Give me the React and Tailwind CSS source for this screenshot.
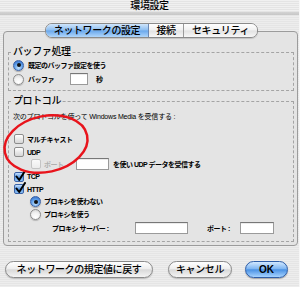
import React from "react";

// Aqua 風の小さな部品
const FONT = "font-['Liberation_Sans','Noto_Sans_CJK_JP',sans-serif]";
const STRIPES = "bg-[repeating-linear-gradient(#ededed_0_1px,#e5e5e5_1px_2px)]";

const Radio = ({ checked }) =>
  checked ? (
    <span className="w-[11px] h-[11px] shrink-0 rounded-full border border-[#3b62a6] bg-[radial-gradient(circle_at_50%_75%,#c4e4ff,#5a9ae6_55%,#2d63bd)] flex items-center justify-center shadow-[0_1px_1px_rgba(0,0,0,0.25)]">
      <span className="w-[4px] h-[4px] rounded-full bg-[#111]" />
    </span>
  ) : (
    <span className="w-[11px] h-[11px] shrink-0 rounded-full border border-[#8c8c8c] bg-[radial-gradient(circle_at_50%_80%,#ffffff,#f2f2f2_50%,#cfcfcf)] shadow-[0_1px_1px_rgba(0,0,0,0.2)]" />
  );

const Check = ({ checked, disabled }) =>
  checked ? (
    <span className="relative w-[10px] h-[10px] shrink-0 rounded-[2px] border border-[#3b62a6] bg-[linear-gradient(#c4e0ff,#5c9ae4_50%,#8cc0f5)]">
      <svg className="absolute left-[0px] top-[-3px]" width="11" height="12" viewBox="0 0 11 12">
        <path d="M1.5 6.5 L4.2 10 L10 1" fill="none" stroke="#000" strokeWidth="2" strokeLinecap="round" strokeLinejoin="round" />
      </svg>
    </span>
  ) : (
    <span
      className={`w-[10px] h-[10px] shrink-0 rounded-[2px] border ${
        disabled
          ? "border-[#c4c4c4] bg-[linear-gradient(#fafafa,#ececec)]"
          : "border-[#8c8c8c] bg-[linear-gradient(#ffffff,#e9e9e9_50%,#d6d6d6)]"
      }`}
    />
  );

const Field = ({ w }) => (
  <span
    className="h-[12px] shrink-0 bg-white border border-[#9a9a9a] border-t-[#777] shadow-[inset_0_1px_0_rgba(0,0,0,0.08)]"
    style={{ width: w }}
  />
);

const Group = ({ title, className, children }) => (
  <fieldset className={`ml-[4px] w-[286px] border border-dashed border-[#a4a4a4] ${className}`}>
    <legend className="ml-[3px] px-[1px] text-[10px] leading-[12px] tracking-[-0.4px] font-medium text-black">{title}</legend>
    {children}
  </fieldset>
);

const Label = ({ children, className = "" }) => (
  <span className={`text-[7px] leading-[9px] font-bold tracking-[-0.5px] whitespace-nowrap ${className}`}>{children}</span>
);

export default function App() {
  return (
    <div className={`relative w-[300px] h-[287px] overflow-hidden text-black border-r border-[#f6f6f6] ${FONT} ${STRIPES}`}>
      {/* タイトルバー */}
      <div className="h-[12px] flex items-center justify-center text-[10px] leading-[12px] tracking-[-0.4px] font-medium bg-[repeating-linear-gradient(#f0f0f0_0_1px,#e4e4e4_1px_2px)]">
        環境設定
      </div>
      <div className="h-[3px] bg-[linear-gradient(#d4d4d4,#c6c6c6)]" />

      {/* タブ */}
      <div className="relative z-10 mt-[8px] ml-[45px] flex h-[15px] w-[213px] rounded-[7px] border border-[#8a8a8a] overflow-hidden text-[10px] leading-[13px] tracking-[-0.4px] font-medium shadow-[0_1px_1px_rgba(0,0,0,0.15)]">
        <div className="w-[103px] flex items-center justify-center bg-[linear-gradient(#cfe5fb,#8cbdf0_48%,#6aa8ec_52%,#b0d6fb)] border-r border-[#6a87b4]">
          ネットワークの設定
        </div>
        <div className="w-[35px] flex items-center justify-center bg-[linear-gradient(#ffffff,#f0f0f0_48%,#e2e2e2_52%,#f7f7f7)] border-r border-[#9a9a9a]">
          接続
        </div>
        <div className="flex-1 flex items-center justify-center bg-[linear-gradient(#ffffff,#f0f0f0_48%,#e2e2e2_52%,#f7f7f7)]">
          セキュリティ
        </div>
      </div>

      {/* タブパネル */}
      <div className="-mt-[7px] ml-[3px] w-[295px] h-[215px] rounded-[4px] border border-[#9c9c9c] bg-[#e4e4e4] pt-[14px]">
        <Group title="バッファ処理" className="pb-[4px]">
          <div className="pl-[4px]">
            <div className="flex items-center h-[14px] gap-[4px]">
              <Radio checked />
              <Label>既定のバッファ設定を使う</Label>
            </div>
            <div className="flex items-center h-[14px] gap-[4px]">
              <Radio />
              <Label className="w-[38px]">バッファ</Label>
              <Field w={18} />
              <Label className="ml-[4px]">秒</Label>
            </div>
          </div>
        </Group>

        <Group title="プロトコル" className="mt-[4px] pb-[6px]">
          <div className="pl-[4px] pt-[4px]">
            <div className="h-[12px] flex items-center text-[7px] tracking-[-0.2px] whitespace-nowrap">
              次のプロトコルを使って Windows Media を受信する :
            </div>
            <div className="mt-[9px] flex items-center h-[14px] gap-[3px] pl-[1px]">
              <Check />
              <Label>マルチキャスト</Label>
            </div>
            <div className="flex items-center h-[12px] gap-[3px] pl-[1px]">
              <Check />
              <Label>UDP</Label>
            </div>
            <div className="flex items-center h-[12px] pl-[18px]">
              <Check disabled />
              <Label className="ml-[3px] w-[32px] text-[#b0b0b0]">ポート</Label>
              <Field w={33} />
              <Label className="ml-[4px]">を使い UDP データを受信する</Label>
            </div>
            <div className="flex items-center h-[13px] gap-[3px] pl-[1px]">
              <Check checked />
              <Label>TCP</Label>
            </div>
            <div className="flex items-center h-[12px] gap-[3px] pl-[1px]">
              <Check checked />
              <Label>HTTP</Label>
            </div>
            <div className="flex items-center h-[13px] gap-[3px] pl-[17px]">
              <Radio checked />
              <Label>プロキシを使わない</Label>
            </div>
            <div className="flex items-center h-[13px] gap-[3px] pl-[17px]">
              <Radio />
              <Label>プロキシを使う</Label>
            </div>
            <div className="flex items-center h-[14px] pl-[39px]">
              <Label className="w-[83px]">プロキシ サーバー :</Label>
              <Field w={53} />
              <Label className="ml-[19px] w-[33px]">ポート :</Label>
              <Field w={34} />
            </div>
          </div>
        </Group>
      </div>

      {/* ボタン */}
      <div className="mt-[15px] flex items-center text-[10px] tracking-[-0.4px] font-medium">
        <button className="ml-[5px] w-[148px] h-[17px] rounded-full border border-[#8a8a8a] bg-[linear-gradient(#ffffff,#eeeeee_45%,#d9d9d9_52%,#f4f4f4)] shadow-[0_1px_1px_rgba(0,0,0,0.2)] leading-[15px]">
          ネットワークの規定値に戻す
        </button>
        <button className="ml-[15px] w-[64px] h-[17px] rounded-full border border-[#8a8a8a] bg-[linear-gradient(#ffffff,#eeeeee_45%,#d9d9d9_52%,#f4f4f4)] shadow-[0_1px_1px_rgba(0,0,0,0.2)] leading-[15px]">
          キャンセル
        </button>
        <button className="ml-[13px] w-[43px] h-[17px] rounded-full border border-[#2f5ea8] bg-[linear-gradient(#d2e8ff,#7fb6f2_45%,#4b92e4_52%,#a6d3ff)] shadow-[0_1px_1px_rgba(0,0,0,0.3)] leading-[15px] font-bold tracking-normal">
          OK
        </button>
      </div>

      {/* 赤い丸の書き込み */}
      <svg className="absolute left-0 top-[104px] pointer-events-none overflow-visible" width="100" height="80" viewBox="0 0 100 80">
        <ellipse cx="46" cy="40" rx="42" ry="28" transform="rotate(-12 46 40)" fill="none" stroke="#e8141c" strokeWidth="2.5" />
      </svg>
    </div>
  );
}
